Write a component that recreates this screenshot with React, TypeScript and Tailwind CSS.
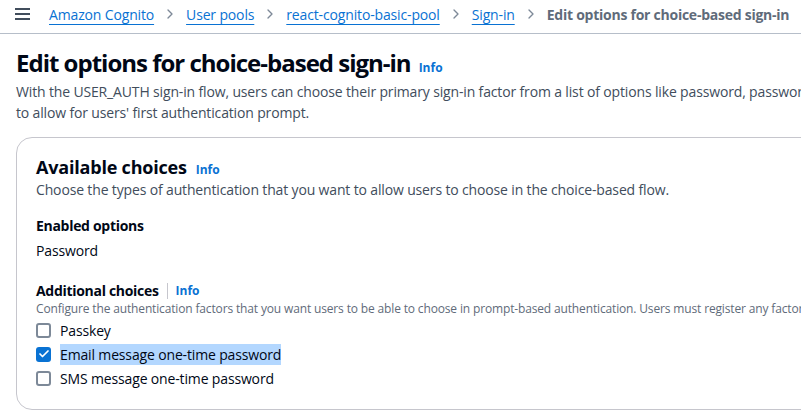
import { Check, ChevronRight } from "lucide-react";

const crumbs = ["Amazon Cognito", "User pools", "react-cognito-basic-pool", "Sign-in"];

type Choice = { id: string; label: string; checked: boolean; selected?: boolean };

const choices: Choice[] = [
  { id: "passkey", label: "Passkey", checked: false },
  { id: "email", label: "Email message one-time password", checked: true, selected: true },
  { id: "sms", label: "SMS message one-time password", checked: false },
];

function InfoLink() {
  return <span className="text-[12px] font-bold tracking-normal text-[#0972d3]">Info</span>;
}

function ChoiceRow({ choice }: { choice: Choice }) {
  return (
    <div className="flex h-6 items-center gap-[9px]">
      {choice.checked ? (
        <span className="flex h-[15px] w-[15px] items-center justify-center rounded-[3px] bg-[#0972d3]">
          <Check className="h-3 w-3 text-white" strokeWidth={3.5} />
        </span>
      ) : (
        <span className="h-[15px] w-[15px] rounded-[3px] border-2 border-[#7d8998] bg-white" />
      )}
      <span
        className={`text-[14px] text-[#000716] ${choice.selected ? "bg-[#b3d7ff]" : ""}`}
      >
        {choice.label}
      </span>
    </div>
  );
}

export default function App() {
  return (
    <div
      className="h-[419px] w-[801px] overflow-hidden bg-white tracking-[-0.15px] text-[#000716]"
      style={{ fontFamily: '"Open Sans", "Noto Sans", sans-serif' }}
    >
      <header className="flex h-[34px] items-center border-b border-[#b6bec9] pb-[5px]">
        <div className="ml-[15px] flex w-[15px] flex-col gap-[3px]">
          <span className="h-[2px] bg-[#414d5c]" />
          <span className="h-[2px] bg-[#414d5c]" />
          <span className="h-[2px] bg-[#414d5c]" />
        </div>
        <nav className="ml-[19px] flex items-center whitespace-nowrap text-[14px]">
          {crumbs.map((c) => (
            <div key={c} className="flex items-center">
              <span className="text-[#0972d3] underline decoration-1 underline-offset-[4px]">
                {c}
              </span>
              <ChevronRight className="mx-[8px] h-4 w-4 text-[#7d8998]" strokeWidth={2} />
            </div>
          ))}
          <span className="font-bold tracking-[-0.25px] text-[#5f6b7a]">
            Edit options for choice-based sign-in
          </span>
        </nav>
      </header>

      <main className="px-4">
        <div className="mt-[13px] flex items-baseline gap-[8px] whitespace-nowrap">
          <h1 className="text-[24px] leading-8 font-bold tracking-[-1px]">
            Edit options for choice-based sign-in
          </h1>
          <InfoLink />
        </div>
        <p className="mt-[2px] w-[900px] text-[14px] leading-[21px] text-[#414d5c]">
          With the USER_AUTH sign-in flow, users can choose their primary sign-in factor from a list of options like password, passwordless
          <br />
          to allow for users' first authentication prompt.
        </p>

        <section className="mt-[14px] w-[900px] rounded-2xl border border-[#c6c6cd] px-[19px] pt-[17px] pb-[19px]">
          <div className="flex items-baseline gap-[9px]">
            <h2 className="text-[18px] leading-6 font-bold tracking-[-0.2px]">Available choices</h2>
            <InfoLink />
          </div>
          <p className="mt-[1px] text-[14px] leading-5 text-[#414d5c]">
            Choose the types of authentication that you want to allow users to choose in the choice-based flow.
          </p>

          <h3 className="mt-[16px] text-[14px] leading-5 font-bold tracking-[-0.3px]">Enabled options</h3>
          <p className="mt-[5px] text-[14px] leading-5">Password</p>

          <div className="mt-[20px] flex items-center whitespace-nowrap">
            <h3 className="text-[14px] leading-5 font-bold tracking-[-0.3px]">Additional choices</h3>
            <span className="mx-[8px] h-[16px] w-px bg-[#c6c6cd]" />
            <InfoLink />
          </div>
          <p className="whitespace-nowrap text-[12px] leading-4 text-[#5f6b7a]">
            Configure the authentication factors that you want users to be able to choose in prompt-based authentication. Users must register any factors
          </p>
          <div className="mt-[1px] flex flex-col">
            {choices.map((c) => (
              <ChoiceRow key={c.id} choice={c} />
            ))}
          </div>
        </section>
      </main>
    </div>
  );
}
